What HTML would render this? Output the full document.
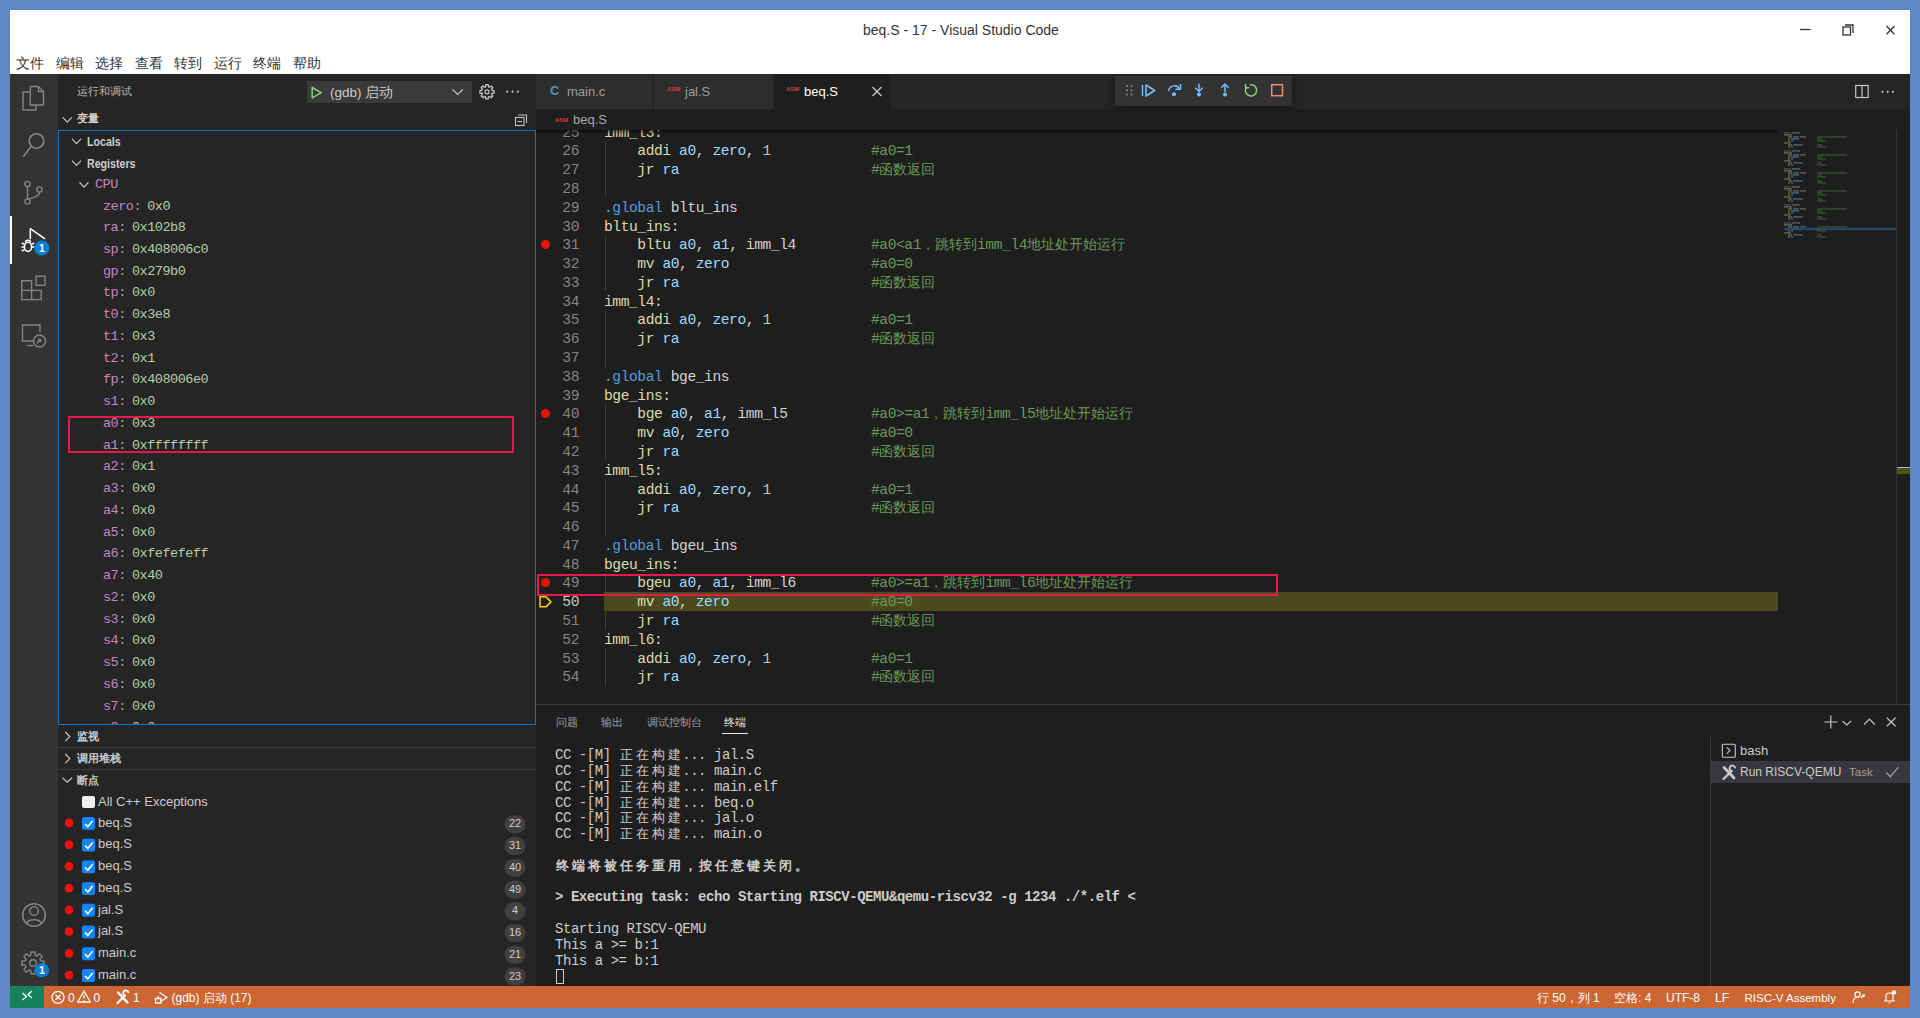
<!DOCTYPE html><html><head><meta charset="utf-8"><style>
*{margin:0;padding:0;box-sizing:border-box}
html,body{width:1920px;height:1018px;overflow:hidden;background:#6088c6;font-family:"Liberation Sans",sans-serif}
.a{position:absolute;white-space:pre}
.m{font-family:"Liberation Mono",monospace}
svg{position:absolute;overflow:visible}
.ln{position:absolute;left:0;width:43px;text-align:right;color:#858585}
.cd{position:absolute;left:68px;color:#d4d4d4}
.k{color:#dcdcaa}.r{color:#9cdcfe}.n{color:#b5cea8}.g{color:#569cd6}.c{color:#6a9955}.w{color:#d4d4d4}
.menu{top:54.5px;font-size:13.5px;color:#333;line-height:18px}
.vn{color:#c586c0}.vv{color:#b5cea8}
.row{position:absolute;height:21.74px;line-height:21.74px}
.cj{display:inline-block;width:15.9px;text-align:center;letter-spacing:0;font-size:13.25px}
</style></head><body>
<div class="a" style="left:10px;top:10px;width:1900px;height:64px;background:#fff"></div>
<div class="a" style="left:863px;top:21px;font-size:14px;color:#333;line-height:18px">beq.S - 17 - Visual Studio Code</div>
<div class="a menu" style="left:16px">文件</div>
<div class="a menu" style="left:56px">编辑</div>
<div class="a menu" style="left:95px">选择</div>
<div class="a menu" style="left:135px">查看</div>
<div class="a menu" style="left:174px">转到</div>
<div class="a menu" style="left:214px">运行</div>
<div class="a menu" style="left:253px">终端</div>
<div class="a menu" style="left:293px">帮助</div>
<svg style="left:0;top:0" width="1920" height="74"><g stroke="#333" stroke-width="1.3" fill="none"><line x1="1800" y1="29.5" x2="1810.5" y2="29.5"/><rect x="1843" y="27" width="7.5" height="8"/><polyline points="1845,25 1853,25 1853,33"/><line x1="1886.5" y1="26" x2="1894.5" y2="34.3"/><line x1="1894.5" y1="26" x2="1886.5" y2="34.3"/></g></svg>
<div class="a" style="left:10px;top:74px;width:48px;height:912px;background:#333333"></div>
<div class="a" style="left:58px;top:74px;width:478px;height:912px;background:#252526"></div>
<div class="a" style="left:536px;top:74px;width:1374px;height:912px;background:#1e1e1e"></div>
<div class="a" style="left:536px;top:74px;width:1374px;height:35px;background:#252526"></div>
<svg style="left:0;top:0" width="60" height="1018"><g stroke="#858585" stroke-width="1.4" fill="none" stroke-linejoin="round"><path d="M30.5,86.5 h8 l5,5 v13.5 h-13.5 z"/><path d="M38.5,86.5 v5 h5"/><path d="M30.5,92 h-7.5 v18 h13 v-5"/></g><g stroke="#858585" stroke-width="1.6" fill="none"><circle cx="36.5" cy="141" r="7.3"/><line x1="31.3" y1="146.3" x2="23.3" y2="156.8"/></g><g stroke="#858585" stroke-width="1.4" fill="none"><circle cx="27.5" cy="184" r="2.6"/><circle cx="27.5" cy="201.5" r="2.6"/><circle cx="39.5" cy="189.5" r="2.6"/><path d="M27.5,186.6 v12.3"/><path d="M39.5,192.1 c0,4 -4,5 -12,7"/></g><g stroke="#fff" stroke-width="1.5" fill="none" stroke-linejoin="round"><path d="M30.3,239.3 v-10.6 l14.7,10.2"/><ellipse cx="28" cy="246.8" rx="3.6" ry="4.6"/><path d="M25.5,242.3 a2.5,2 0 0 1 5,0"/><path d="M21.8,243 l2.6,1.3 M21.5,247 h2.7 M21.8,251 l2.6,-1.3 M34.2,243 l-2.6,1.3 M34.5,247 h-2.7"/></g><circle cx="41.8" cy="248" r="7.6" fill="#0a7fd8"/><text x="41.8" y="252" font-size="10.5" font-weight="bold" fill="#fff" text-anchor="middle" font-family="Liberation Sans">1</text><g stroke="#858585" stroke-width="1.4" fill="none"><path d="M21.8,280.8 h9.8 v9.6 h9.6 v9.2 h-19.4 z M21.8,290.4 h9.8 v9.2"/><rect x="36" y="276.2" width="9" height="9"/></g><g stroke="#858585" stroke-width="1.4" fill="none"><path d="M40,332 v-7 h-17.5 v16 h11"/><path d="M27,345.5 h6"/><circle cx="39.5" cy="341" r="6"/><path d="M37,343 l3,-3 M38,339.5 h2.5 v2.5"/></g><g stroke="#858585" stroke-width="1.5" fill="none"><circle cx="34" cy="915" r="11.3"/><circle cx="34" cy="911" r="4.3"/><path d="M26.5,923.5 c2,-5 13,-5 15,0"/></g><g stroke="#858585" stroke-width="1.4" fill="none"><polygon points="40.69,960.79 44.03,961.06 44.03,964.94 40.69,965.21 40.00,966.88 42.17,969.42 39.42,972.17 36.88,970.00 35.21,970.69 34.94,974.03 31.06,974.03 30.79,970.69 29.12,970.00 26.58,972.17 23.83,969.42 26.00,966.88 25.31,965.21 21.97,964.94 21.97,961.06 25.31,960.79 26.00,959.12 23.83,956.58 26.58,953.83 29.12,956.00 30.79,955.31 31.06,951.97 34.94,951.97 35.21,955.31 36.88,956.00 39.42,953.83 42.17,956.58 40.00,959.12" stroke-linejoin="round"/><circle cx="33" cy="963" r="3.3"/></g><circle cx="41.8" cy="970.2" r="7.3" fill="#0a7fd8"/><text x="41.8" y="974.2" font-size="10.5" font-weight="bold" fill="#fff" text-anchor="middle" font-family="Liberation Sans">1</text></svg>
<div class="a" style="left:10px;top:216px;width:2px;height:48px;background:#fff"></div>
<div class="a" style="left:77px;top:84px;font-size:11px;color:#bbbbbb;line-height:15px">运行和调试</div>
<div class="a" style="left:307px;top:81px;width:165px;height:22px;background:#3a3a3a"></div>
<svg style="left:0;top:0" width="540" height="140"><path d="M312.2,87.5 l9,5.2 -9,5.2 z" stroke="#89d185" stroke-width="1.5" fill="none" stroke-linejoin="round"/><path d="M452.5,89.5 l5.2,5 5.2,-5" stroke="#c5c5c5" stroke-width="1.2" fill="none"/></svg>
<div class="a" style="left:330px;top:84px;font-size:13.5px;color:#cccccc;line-height:17px">(gdb) 启动</div>
<svg style="left:0;top:0" width="540" height="140"><polygon points="492.00,90.37 494.09,90.55 494.09,93.05 492.00,93.23 491.55,94.32 492.90,95.93 491.13,97.70 489.52,96.35 488.43,96.80 488.25,98.89 485.75,98.89 485.57,96.80 484.48,96.35 482.87,97.70 481.10,95.93 482.45,94.32 482.00,93.23 479.91,93.05 479.91,90.55 482.00,90.37 482.45,89.28 481.10,87.67 482.87,85.90 484.48,87.25 485.57,86.80 485.75,84.71 488.25,84.71 488.43,86.80 489.52,87.25 491.13,85.90 492.90,87.67 491.55,89.28" stroke="#c5c5c5" stroke-width="1.3" fill="none" stroke-linejoin="round"/><circle cx="487" cy="91.8" r="2" stroke="#c5c5c5" stroke-width="1.2" fill="none"/><g fill="#c5c5c5"><circle cx="507.2" cy="91.7" r="1.1"/><circle cx="512.5" cy="91.7" r="1.1"/><circle cx="517.8" cy="91.7" r="1.1"/></g><g stroke="#c5c5c5" stroke-width="1.1" fill="none"><rect x="515.5" y="117.5" width="8.5" height="8"/><path d="M518,115 h8.5 v8"/><path d="M517.5,121.5 h4.5"/></g><path d="M62.8,117.3 l4.5,4.8 4.5,-4.8" stroke="#c5c5c5" stroke-width="1.2" fill="none"/></svg>
<div class="a" style="left:77px;top:111px;font-size:11px;font-weight:bold;color:#cccccc;line-height:15px">变量</div>
<div class="a" style="left:58px;top:130px;width:478px;height:595px;border:1px solid #0f74c4"></div>
<div class="a" style="left:59px;top:131px;width:476px;height:593px;overflow:hidden">
<div class="row a" style="left:28px;top:0.80px;font-size:12.5px;font-weight:bold;color:#cccccc;transform:scaleX(0.85);transform-origin:0 0">Locals</div>
<div class="row a" style="left:28px;top:22.54px;font-size:12.5px;font-weight:bold;color:#cccccc;transform:scaleX(0.85);transform-origin:0 0">Registers</div>
<div class="row a m" style="left:36px;top:42.78px;font-size:13.5px;letter-spacing:-0.48px;color:#c586c0">CPU</div>
<div class="row a m" style="left:44px;top:64.52px;font-size:13.5px;letter-spacing:-0.48px"><span class="vn">zero</span><span style="color:#a0a0a0">: </span><span class="vv" style="margin-left:-1.5px">0x0</span></div>
<div class="row a m" style="left:44px;top:86.26px;font-size:13.5px;letter-spacing:-0.48px"><span class="vn">ra</span><span style="color:#a0a0a0">: </span><span class="vv" style="margin-left:-1.5px">0x102b8</span></div>
<div class="row a m" style="left:44px;top:108.00px;font-size:13.5px;letter-spacing:-0.48px"><span class="vn">sp</span><span style="color:#a0a0a0">: </span><span class="vv" style="margin-left:-1.5px">0x408006c0</span></div>
<div class="row a m" style="left:44px;top:129.74px;font-size:13.5px;letter-spacing:-0.48px"><span class="vn">gp</span><span style="color:#a0a0a0">: </span><span class="vv" style="margin-left:-1.5px">0x279b0</span></div>
<div class="row a m" style="left:44px;top:151.48px;font-size:13.5px;letter-spacing:-0.48px"><span class="vn">tp</span><span style="color:#a0a0a0">: </span><span class="vv" style="margin-left:-1.5px">0x0</span></div>
<div class="row a m" style="left:44px;top:173.22px;font-size:13.5px;letter-spacing:-0.48px"><span class="vn">t0</span><span style="color:#a0a0a0">: </span><span class="vv" style="margin-left:-1.5px">0x3e8</span></div>
<div class="row a m" style="left:44px;top:194.96px;font-size:13.5px;letter-spacing:-0.48px"><span class="vn">t1</span><span style="color:#a0a0a0">: </span><span class="vv" style="margin-left:-1.5px">0x3</span></div>
<div class="row a m" style="left:44px;top:216.70px;font-size:13.5px;letter-spacing:-0.48px"><span class="vn">t2</span><span style="color:#a0a0a0">: </span><span class="vv" style="margin-left:-1.5px">0x1</span></div>
<div class="row a m" style="left:44px;top:238.44px;font-size:13.5px;letter-spacing:-0.48px"><span class="vn">fp</span><span style="color:#a0a0a0">: </span><span class="vv" style="margin-left:-1.5px">0x408006e0</span></div>
<div class="row a m" style="left:44px;top:260.18px;font-size:13.5px;letter-spacing:-0.48px"><span class="vn">s1</span><span style="color:#a0a0a0">: </span><span class="vv" style="margin-left:-1.5px">0x0</span></div>
<div class="row a m" style="left:44px;top:281.92px;font-size:13.5px;letter-spacing:-0.48px"><span class="vn">a0</span><span style="color:#a0a0a0">: </span><span class="vv" style="margin-left:-1.5px">0x3</span></div>
<div class="row a m" style="left:44px;top:303.66px;font-size:13.5px;letter-spacing:-0.48px"><span class="vn">a1</span><span style="color:#a0a0a0">: </span><span class="vv" style="margin-left:-1.5px">0xffffffff</span></div>
<div class="row a m" style="left:44px;top:325.40px;font-size:13.5px;letter-spacing:-0.48px"><span class="vn">a2</span><span style="color:#a0a0a0">: </span><span class="vv" style="margin-left:-1.5px">0x1</span></div>
<div class="row a m" style="left:44px;top:347.14px;font-size:13.5px;letter-spacing:-0.48px"><span class="vn">a3</span><span style="color:#a0a0a0">: </span><span class="vv" style="margin-left:-1.5px">0x0</span></div>
<div class="row a m" style="left:44px;top:368.88px;font-size:13.5px;letter-spacing:-0.48px"><span class="vn">a4</span><span style="color:#a0a0a0">: </span><span class="vv" style="margin-left:-1.5px">0x0</span></div>
<div class="row a m" style="left:44px;top:390.62px;font-size:13.5px;letter-spacing:-0.48px"><span class="vn">a5</span><span style="color:#a0a0a0">: </span><span class="vv" style="margin-left:-1.5px">0x0</span></div>
<div class="row a m" style="left:44px;top:412.36px;font-size:13.5px;letter-spacing:-0.48px"><span class="vn">a6</span><span style="color:#a0a0a0">: </span><span class="vv" style="margin-left:-1.5px">0xfefefeff</span></div>
<div class="row a m" style="left:44px;top:434.10px;font-size:13.5px;letter-spacing:-0.48px"><span class="vn">a7</span><span style="color:#a0a0a0">: </span><span class="vv" style="margin-left:-1.5px">0x40</span></div>
<div class="row a m" style="left:44px;top:455.84px;font-size:13.5px;letter-spacing:-0.48px"><span class="vn">s2</span><span style="color:#a0a0a0">: </span><span class="vv" style="margin-left:-1.5px">0x0</span></div>
<div class="row a m" style="left:44px;top:477.58px;font-size:13.5px;letter-spacing:-0.48px"><span class="vn">s3</span><span style="color:#a0a0a0">: </span><span class="vv" style="margin-left:-1.5px">0x0</span></div>
<div class="row a m" style="left:44px;top:499.32px;font-size:13.5px;letter-spacing:-0.48px"><span class="vn">s4</span><span style="color:#a0a0a0">: </span><span class="vv" style="margin-left:-1.5px">0x0</span></div>
<div class="row a m" style="left:44px;top:521.06px;font-size:13.5px;letter-spacing:-0.48px"><span class="vn">s5</span><span style="color:#a0a0a0">: </span><span class="vv" style="margin-left:-1.5px">0x0</span></div>
<div class="row a m" style="left:44px;top:542.80px;font-size:13.5px;letter-spacing:-0.48px"><span class="vn">s6</span><span style="color:#a0a0a0">: </span><span class="vv" style="margin-left:-1.5px">0x0</span></div>
<div class="row a m" style="left:44px;top:564.54px;font-size:13.5px;letter-spacing:-0.48px"><span class="vn">s7</span><span style="color:#a0a0a0">: </span><span class="vv" style="margin-left:-1.5px">0x0</span></div>
<div class="row a m" style="left:44px;top:586.28px;font-size:13.5px;letter-spacing:-0.48px"><span class="vn">s8</span><span style="color:#a0a0a0">: </span><span class="vv" style="margin-left:-1.5px">0x0</span></div>
<svg style="left:0;top:0" width="476" height="100"><path d="M13,7.80 l4.5,4.8 4.5,-4.8" stroke="#c5c5c5" stroke-width="1.2" fill="none"/><path d="M13,29.54 l4.5,4.8 4.5,-4.8" stroke="#c5c5c5" stroke-width="1.2" fill="none"/><path d="M20.5,51.28 l4.5,4.8 4.5,-4.8" stroke="#c5c5c5" stroke-width="1.2" fill="none"/></svg>
</div>
<div class="a" style="left:68px;top:416px;width:446px;height:37px;border:2px solid #e6194b"></div>
<div class="a" style="left:77px;top:729.0px;font-size:11px;font-weight:bold;color:#cccccc;line-height:15px">监视</div>
<div class="a" style="left:58px;top:747.0px;width:478px;height:1px;background:#3c3c3c"></div>
<div class="a" style="left:77px;top:751.0px;font-size:11px;font-weight:bold;color:#cccccc;line-height:15px">调用堆栈</div>
<div class="a" style="left:58px;top:769.0px;width:478px;height:1px;background:#3c3c3c"></div>
<div class="a" style="left:77px;top:773.0px;font-size:11px;font-weight:bold;color:#cccccc;line-height:15px">断点</div>
<svg style="left:0;top:0" width="540" height="1018"><g stroke="#c5c5c5" stroke-width="1.2" fill="none"><path d="M65.3,732 l4.5,4.6 -4.5,4.6"/><path d="M65.3,754 l4.5,4.6 -4.5,4.6"/><path d="M62.5,777.8 l4.8,4.5 4.8,-4.5"/></g></svg>
<div class="a" style="left:82px;top:795.5px;width:13px;height:12.5px;background:#f0f0f0;border-radius:2px"></div>
<div class="a" style="left:98px;top:790.90px;font-size:13px;color:#cccccc;line-height:21.74px">All C++ Exceptions</div>
<svg style="left:0;top:0" width="540" height="1018"><circle cx="69" cy="822.91" r="4.3" fill="#f01010"/><rect x="82" y="816.91" width="13" height="12.8" rx="2" fill="#1585f5"/><path d="M85,823.71 l2.8,3 4.8,-6" stroke="#fff" stroke-width="1.6" fill="none"/><rect x="504.5" y="815.21" width="21" height="18" rx="9" fill="#404040"/><circle cx="69" cy="844.65" r="4.3" fill="#f01010"/><rect x="82" y="838.65" width="13" height="12.8" rx="2" fill="#1585f5"/><path d="M85,845.45 l2.8,3 4.8,-6" stroke="#fff" stroke-width="1.6" fill="none"/><rect x="504.5" y="836.95" width="21" height="18" rx="9" fill="#404040"/><circle cx="69" cy="866.39" r="4.3" fill="#f01010"/><rect x="82" y="860.39" width="13" height="12.8" rx="2" fill="#1585f5"/><path d="M85,867.19 l2.8,3 4.8,-6" stroke="#fff" stroke-width="1.6" fill="none"/><rect x="504.5" y="858.69" width="21" height="18" rx="9" fill="#404040"/><circle cx="69" cy="888.13" r="4.3" fill="#f01010"/><rect x="82" y="882.13" width="13" height="12.8" rx="2" fill="#1585f5"/><path d="M85,888.93 l2.8,3 4.8,-6" stroke="#fff" stroke-width="1.6" fill="none"/><rect x="504.5" y="880.43" width="21" height="18" rx="9" fill="#404040"/><circle cx="69" cy="909.87" r="4.3" fill="#f01010"/><rect x="82" y="903.87" width="13" height="12.8" rx="2" fill="#1585f5"/><path d="M85,910.67 l2.8,3 4.8,-6" stroke="#fff" stroke-width="1.6" fill="none"/><rect x="504.5" y="902.17" width="21" height="18" rx="9" fill="#404040"/><circle cx="69" cy="931.61" r="4.3" fill="#f01010"/><rect x="82" y="925.61" width="13" height="12.8" rx="2" fill="#1585f5"/><path d="M85,932.41 l2.8,3 4.8,-6" stroke="#fff" stroke-width="1.6" fill="none"/><rect x="504.5" y="923.91" width="21" height="18" rx="9" fill="#404040"/><circle cx="69" cy="953.35" r="4.3" fill="#f01010"/><rect x="82" y="947.35" width="13" height="12.8" rx="2" fill="#1585f5"/><path d="M85,954.15 l2.8,3 4.8,-6" stroke="#fff" stroke-width="1.6" fill="none"/><rect x="504.5" y="945.65" width="21" height="18" rx="9" fill="#404040"/><circle cx="69" cy="975.09" r="4.3" fill="#f01010"/><rect x="82" y="969.09" width="13" height="12.8" rx="2" fill="#1585f5"/><path d="M85,975.89 l2.8,3 4.8,-6" stroke="#fff" stroke-width="1.6" fill="none"/><rect x="504.5" y="967.39" width="21" height="18" rx="9" fill="#404040"/></svg>
<div class="a" style="left:98px;top:811.64px;font-size:13px;color:#cccccc;line-height:21.74px">beq.S</div>
<div class="a" style="left:504.5px;width:21px;text-align:center;top:813.34px;font-size:11px;color:#cccccc;line-height:21.74px">22</div>
<div class="a" style="left:98px;top:833.38px;font-size:13px;color:#cccccc;line-height:21.74px">beq.S</div>
<div class="a" style="left:504.5px;width:21px;text-align:center;top:835.08px;font-size:11px;color:#cccccc;line-height:21.74px">31</div>
<div class="a" style="left:98px;top:855.12px;font-size:13px;color:#cccccc;line-height:21.74px">beq.S</div>
<div class="a" style="left:504.5px;width:21px;text-align:center;top:856.82px;font-size:11px;color:#cccccc;line-height:21.74px">40</div>
<div class="a" style="left:98px;top:876.86px;font-size:13px;color:#cccccc;line-height:21.74px">beq.S</div>
<div class="a" style="left:504.5px;width:21px;text-align:center;top:878.56px;font-size:11px;color:#cccccc;line-height:21.74px">49</div>
<div class="a" style="left:98px;top:898.60px;font-size:13px;color:#cccccc;line-height:21.74px">jal.S</div>
<div class="a" style="left:504.5px;width:21px;text-align:center;top:900.30px;font-size:11px;color:#cccccc;line-height:21.74px">4</div>
<div class="a" style="left:98px;top:920.34px;font-size:13px;color:#cccccc;line-height:21.74px">jal.S</div>
<div class="a" style="left:504.5px;width:21px;text-align:center;top:922.04px;font-size:11px;color:#cccccc;line-height:21.74px">16</div>
<div class="a" style="left:98px;top:942.08px;font-size:13px;color:#cccccc;line-height:21.74px">main.c</div>
<div class="a" style="left:504.5px;width:21px;text-align:center;top:943.78px;font-size:11px;color:#cccccc;line-height:21.74px">21</div>
<div class="a" style="left:98px;top:963.82px;font-size:13px;color:#cccccc;line-height:21.74px">main.c</div>
<div class="a" style="left:504.5px;width:21px;text-align:center;top:965.52px;font-size:11px;color:#cccccc;line-height:21.74px">23</div>
<div class="a" style="left:536px;top:74px;width:116px;height:35px;background:#2d2d2d"></div>
<div class="a" style="left:652.5px;top:74px;width:120px;height:35px;background:#2d2d2d;border-left:1px solid #252526"></div>
<div class="a" style="left:772.5px;top:74px;width:117px;height:35px;background:#1e1e1e;border-left:1px solid #252526"></div>
<div class="a" style="left:550px;top:82px;font-size:13px;font-weight:bold;color:#519aba;line-height:17px">C</div>
<div class="a" style="left:567px;top:83px;font-size:13px;color:#9d9d9d;line-height:17px">main.c</div>
<div class="a" style="left:667px;top:85px;font-size:6px;font-weight:bold;color:#cc3e44;line-height:8px">ASM</div>
<div class="a" style="left:685px;top:83px;font-size:13px;color:#9d9d9d;line-height:17px">jal.S</div>
<div class="a" style="left:786px;top:85px;font-size:6px;font-weight:bold;color:#cc3e44;line-height:8px">ASM</div>
<div class="a" style="left:804px;top:83px;font-size:13px;color:#ffffff;line-height:17px">beq.S</div>
<svg style="left:0;top:0" width="1920" height="140"><g stroke="#cccccc" stroke-width="1.3"><line x1="872.5" y1="87" x2="881.5" y2="96"/><line x1="881.5" y1="87" x2="872.5" y2="96"/></g><g stroke="#c5c5c5" stroke-width="1.2" fill="none"><rect x="1855.7" y="85.5" width="12.5" height="12"/><line x1="1862" y1="85.5" x2="1862" y2="97.5"/></g><g fill="#c5c5c5"><circle cx="1882.5" cy="91.8" r="1.1"/><circle cx="1887.7" cy="91.8" r="1.1"/><circle cx="1892.9" cy="91.8" r="1.1"/></g></svg>
<div class="a" style="left:555px;top:116px;font-size:6px;font-weight:bold;color:#cc3e44;line-height:8px">ASM</div>
<div class="a" style="left:573px;top:111px;font-size:13px;color:#a9a9a9;line-height:17px">beq.S</div>
<div class="a" style="left:1114.5px;top:75.5px;width:177px;height:30px;background:#333333;box-shadow:0 2px 6px rgba(0,0,0,.45)"></div>
<svg style="left:0;top:0" width="1920" height="140"><g fill="#8a8a8a"><circle cx="1127" cy="86" r="1"/><circle cx="1131.5" cy="86" r="1"/><circle cx="1127" cy="90.2" r="1"/><circle cx="1131.5" cy="90.2" r="1"/><circle cx="1127" cy="94.4" r="1"/><circle cx="1131.5" cy="94.4" r="1"/></g><g stroke="#75beff" stroke-width="1.5" fill="none" stroke-linejoin="round"><line x1="1142.5" y1="85" x2="1142.5" y2="96"/><path d="M1146,85 l8.7,5.5 -8.7,5.5 z"/><path d="M1168.5,91 c1,-6 9,-7 11,-2"/><path d="M1180.5,84 v5.3 h-5"/><path d="M1199,83.5 v8"/><path d="M1195.3,87.8 l3.7,3.7 3.7,-3.7"/><path d="M1225,84 v8"/><path d="M1221.3,87.7 l3.7,-3.7 3.7,3.7"/></g><g fill="#75beff"><circle cx="1174" cy="94.3" r="2"/><circle cx="1199" cy="94.5" r="2"/><circle cx="1225" cy="94.5" r="2"/></g><g stroke="#89d185" stroke-width="1.5" fill="none"><path d="M1246.5,87 a5.6,5.6 0 1 0 3.5,-2.2"/><path d="M1245.5,84 v3.7 h3.7"/></g><rect x="1271.7" y="84.7" width="10.8" height="11" stroke="#f48771" stroke-width="1.5" fill="none"/></svg>
<div class="a m" style="left:536px;top:129.5px;width:1242px;height:574.5px;overflow:hidden;font-size:14.6px;letter-spacing:-0.42px">
<div class="a" style="left:68px;top:462.46px;width:1174px;height:18.79px;background:#4b4a1e"></div>
<div class="a" style="left:69px;top:11.60px;width:1px;height:56.36px;background:#404040"></div><div class="a" style="left:69px;top:105.53px;width:1px;height:56.36px;background:#404040"></div><div class="a" style="left:69px;top:180.67px;width:1px;height:56.36px;background:#404040"></div><div class="a" style="left:69px;top:274.60px;width:1px;height:56.36px;background:#404040"></div><div class="a" style="left:69px;top:349.75px;width:1px;height:56.36px;background:#404040"></div><div class="a" style="left:69px;top:443.68px;width:1px;height:56.36px;background:#404040"></div><div class="a" style="left:69px;top:518.82px;width:1px;height:37.57px;background:#404040"></div>
<div class="ln" style="top:-5.89px;line-height:18.79px;color:#858585">25</div>
<div class="cd a" style="top:-5.89px;line-height:18.79px"><span class="k">imm_l3:</span></div>
<div class="ln" style="top:12.90px;line-height:18.79px;color:#858585">26</div>
<div class="cd a" style="top:12.90px;line-height:18.79px"><span class="w">    </span><span class="k">addi</span><span class="w"> </span><span class="r">a0</span><span class="w">, </span><span class="r">zero</span><span class="w">, </span><span class="n">1</span></div>
<div class="a c" style="left:335px;top:12.90px;line-height:18.79px">#a0=1</div>
<div class="ln" style="top:31.69px;line-height:18.79px;color:#858585">27</div>
<div class="cd a" style="top:31.69px;line-height:18.79px"><span class="w">    </span><span class="k">jr</span><span class="w"> </span><span class="r">ra</span></div>
<div class="a c" style="left:335px;top:31.69px;line-height:18.79px">#<span style="font-size:13.9px;letter-spacing:0">函</span><span style="font-size:13.9px;letter-spacing:0">数</span><span style="font-size:13.9px;letter-spacing:0">返</span><span style="font-size:13.9px;letter-spacing:0">回</span></div>
<div class="ln" style="top:50.47px;line-height:18.79px;color:#858585">28</div>
<div class="cd a" style="top:50.47px;line-height:18.79px"></div>
<div class="ln" style="top:69.26px;line-height:18.79px;color:#858585">29</div>
<div class="cd a" style="top:69.26px;line-height:18.79px"><span class="g">.global</span><span class="w"> bltu_ins</span></div>
<div class="ln" style="top:88.04px;line-height:18.79px;color:#858585">30</div>
<div class="cd a" style="top:88.04px;line-height:18.79px"><span class="k">bltu_ins:</span></div>
<div class="ln" style="top:106.83px;line-height:18.79px;color:#858585">31</div>
<div class="cd a" style="top:106.83px;line-height:18.79px"><span class="w">    </span><span class="k">bltu</span><span class="w"> </span><span class="r">a0</span><span class="w">, </span><span class="r">a1</span><span class="w">, imm_l4</span></div>
<div class="a c" style="left:335px;top:106.83px;line-height:18.79px">#a0&lt;a1<span style="font-size:13.9px;letter-spacing:0">，</span><span style="font-size:13.9px;letter-spacing:0">跳</span><span style="font-size:13.9px;letter-spacing:0">转</span><span style="font-size:13.9px;letter-spacing:0">到</span>imm_l4<span style="font-size:13.9px;letter-spacing:0">地</span><span style="font-size:13.9px;letter-spacing:0">址</span><span style="font-size:13.9px;letter-spacing:0">处</span><span style="font-size:13.9px;letter-spacing:0">开</span><span style="font-size:13.9px;letter-spacing:0">始</span><span style="font-size:13.9px;letter-spacing:0">运</span><span style="font-size:13.9px;letter-spacing:0">行</span></div>
<div class="ln" style="top:125.62px;line-height:18.79px;color:#858585">32</div>
<div class="cd a" style="top:125.62px;line-height:18.79px"><span class="w">    </span><span class="k">mv</span><span class="w"> </span><span class="r">a0</span><span class="w">, </span><span class="r">zero</span></div>
<div class="a c" style="left:335px;top:125.62px;line-height:18.79px">#a0=0</div>
<div class="ln" style="top:144.40px;line-height:18.79px;color:#858585">33</div>
<div class="cd a" style="top:144.40px;line-height:18.79px"><span class="w">    </span><span class="k">jr</span><span class="w"> </span><span class="r">ra</span></div>
<div class="a c" style="left:335px;top:144.40px;line-height:18.79px">#<span style="font-size:13.9px;letter-spacing:0">函</span><span style="font-size:13.9px;letter-spacing:0">数</span><span style="font-size:13.9px;letter-spacing:0">返</span><span style="font-size:13.9px;letter-spacing:0">回</span></div>
<div class="ln" style="top:163.19px;line-height:18.79px;color:#858585">34</div>
<div class="cd a" style="top:163.19px;line-height:18.79px"><span class="k">imm_l4:</span></div>
<div class="ln" style="top:181.97px;line-height:18.79px;color:#858585">35</div>
<div class="cd a" style="top:181.97px;line-height:18.79px"><span class="w">    </span><span class="k">addi</span><span class="w"> </span><span class="r">a0</span><span class="w">, </span><span class="r">zero</span><span class="w">, </span><span class="n">1</span></div>
<div class="a c" style="left:335px;top:181.97px;line-height:18.79px">#a0=1</div>
<div class="ln" style="top:200.76px;line-height:18.79px;color:#858585">36</div>
<div class="cd a" style="top:200.76px;line-height:18.79px"><span class="w">    </span><span class="k">jr</span><span class="w"> </span><span class="r">ra</span></div>
<div class="a c" style="left:335px;top:200.76px;line-height:18.79px">#<span style="font-size:13.9px;letter-spacing:0">函</span><span style="font-size:13.9px;letter-spacing:0">数</span><span style="font-size:13.9px;letter-spacing:0">返</span><span style="font-size:13.9px;letter-spacing:0">回</span></div>
<div class="ln" style="top:219.55px;line-height:18.79px;color:#858585">37</div>
<div class="cd a" style="top:219.55px;line-height:18.79px"></div>
<div class="ln" style="top:238.33px;line-height:18.79px;color:#858585">38</div>
<div class="cd a" style="top:238.33px;line-height:18.79px"><span class="g">.global</span><span class="w"> bge_ins</span></div>
<div class="ln" style="top:257.12px;line-height:18.79px;color:#858585">39</div>
<div class="cd a" style="top:257.12px;line-height:18.79px"><span class="k">bge_ins:</span></div>
<div class="ln" style="top:275.90px;line-height:18.79px;color:#858585">40</div>
<div class="cd a" style="top:275.90px;line-height:18.79px"><span class="w">    </span><span class="k">bge</span><span class="w"> </span><span class="r">a0</span><span class="w">, </span><span class="r">a1</span><span class="w">, imm_l5</span></div>
<div class="a c" style="left:335px;top:275.90px;line-height:18.79px">#a0&gt;=a1<span style="font-size:13.9px;letter-spacing:0">，</span><span style="font-size:13.9px;letter-spacing:0">跳</span><span style="font-size:13.9px;letter-spacing:0">转</span><span style="font-size:13.9px;letter-spacing:0">到</span>imm_l5<span style="font-size:13.9px;letter-spacing:0">地</span><span style="font-size:13.9px;letter-spacing:0">址</span><span style="font-size:13.9px;letter-spacing:0">处</span><span style="font-size:13.9px;letter-spacing:0">开</span><span style="font-size:13.9px;letter-spacing:0">始</span><span style="font-size:13.9px;letter-spacing:0">运</span><span style="font-size:13.9px;letter-spacing:0">行</span></div>
<div class="ln" style="top:294.69px;line-height:18.79px;color:#858585">41</div>
<div class="cd a" style="top:294.69px;line-height:18.79px"><span class="w">    </span><span class="k">mv</span><span class="w"> </span><span class="r">a0</span><span class="w">, </span><span class="r">zero</span></div>
<div class="a c" style="left:335px;top:294.69px;line-height:18.79px">#a0=0</div>
<div class="ln" style="top:313.48px;line-height:18.79px;color:#858585">42</div>
<div class="cd a" style="top:313.48px;line-height:18.79px"><span class="w">    </span><span class="k">jr</span><span class="w"> </span><span class="r">ra</span></div>
<div class="a c" style="left:335px;top:313.48px;line-height:18.79px">#<span style="font-size:13.9px;letter-spacing:0">函</span><span style="font-size:13.9px;letter-spacing:0">数</span><span style="font-size:13.9px;letter-spacing:0">返</span><span style="font-size:13.9px;letter-spacing:0">回</span></div>
<div class="ln" style="top:332.26px;line-height:18.79px;color:#858585">43</div>
<div class="cd a" style="top:332.26px;line-height:18.79px"><span class="k">imm_l5:</span></div>
<div class="ln" style="top:351.05px;line-height:18.79px;color:#858585">44</div>
<div class="cd a" style="top:351.05px;line-height:18.79px"><span class="w">    </span><span class="k">addi</span><span class="w"> </span><span class="r">a0</span><span class="w">, </span><span class="r">zero</span><span class="w">, </span><span class="n">1</span></div>
<div class="a c" style="left:335px;top:351.05px;line-height:18.79px">#a0=1</div>
<div class="ln" style="top:369.83px;line-height:18.79px;color:#858585">45</div>
<div class="cd a" style="top:369.83px;line-height:18.79px"><span class="w">    </span><span class="k">jr</span><span class="w"> </span><span class="r">ra</span></div>
<div class="a c" style="left:335px;top:369.83px;line-height:18.79px">#<span style="font-size:13.9px;letter-spacing:0">函</span><span style="font-size:13.9px;letter-spacing:0">数</span><span style="font-size:13.9px;letter-spacing:0">返</span><span style="font-size:13.9px;letter-spacing:0">回</span></div>
<div class="ln" style="top:388.62px;line-height:18.79px;color:#858585">46</div>
<div class="cd a" style="top:388.62px;line-height:18.79px"></div>
<div class="ln" style="top:407.41px;line-height:18.79px;color:#858585">47</div>
<div class="cd a" style="top:407.41px;line-height:18.79px"><span class="g">.global</span><span class="w"> bgeu_ins</span></div>
<div class="ln" style="top:426.19px;line-height:18.79px;color:#858585">48</div>
<div class="cd a" style="top:426.19px;line-height:18.79px"><span class="k">bgeu_ins:</span></div>
<div class="ln" style="top:444.98px;line-height:18.79px;color:#858585">49</div>
<div class="cd a" style="top:444.98px;line-height:18.79px"><span class="w">    </span><span class="k">bgeu</span><span class="w"> </span><span class="r">a0</span><span class="w">, </span><span class="r">a1</span><span class="w">, imm_l6</span></div>
<div class="a c" style="left:335px;top:444.98px;line-height:18.79px">#a0&gt;=a1<span style="font-size:13.9px;letter-spacing:0">，</span><span style="font-size:13.9px;letter-spacing:0">跳</span><span style="font-size:13.9px;letter-spacing:0">转</span><span style="font-size:13.9px;letter-spacing:0">到</span>imm_l6<span style="font-size:13.9px;letter-spacing:0">地</span><span style="font-size:13.9px;letter-spacing:0">址</span><span style="font-size:13.9px;letter-spacing:0">处</span><span style="font-size:13.9px;letter-spacing:0">开</span><span style="font-size:13.9px;letter-spacing:0">始</span><span style="font-size:13.9px;letter-spacing:0">运</span><span style="font-size:13.9px;letter-spacing:0">行</span></div>
<div class="ln" style="top:463.76px;line-height:18.79px;color:#c6c6c6">50</div>
<div class="cd a" style="top:463.76px;line-height:18.79px"><span class="w">    </span><span class="k">mv</span><span class="w"> </span><span class="r">a0</span><span class="w">, </span><span class="r">zero</span></div>
<div class="a c" style="left:335px;top:463.76px;line-height:18.79px">#a0=0</div>
<div class="ln" style="top:482.55px;line-height:18.79px;color:#858585">51</div>
<div class="cd a" style="top:482.55px;line-height:18.79px"><span class="w">    </span><span class="k">jr</span><span class="w"> </span><span class="r">ra</span></div>
<div class="a c" style="left:335px;top:482.55px;line-height:18.79px">#<span style="font-size:13.9px;letter-spacing:0">函</span><span style="font-size:13.9px;letter-spacing:0">数</span><span style="font-size:13.9px;letter-spacing:0">返</span><span style="font-size:13.9px;letter-spacing:0">回</span></div>
<div class="ln" style="top:501.34px;line-height:18.79px;color:#858585">52</div>
<div class="cd a" style="top:501.34px;line-height:18.79px"><span class="k">imm_l6:</span></div>
<div class="ln" style="top:520.12px;line-height:18.79px;color:#858585">53</div>
<div class="cd a" style="top:520.12px;line-height:18.79px"><span class="w">    </span><span class="k">addi</span><span class="w"> </span><span class="r">a0</span><span class="w">, </span><span class="r">zero</span><span class="w">, </span><span class="n">1</span></div>
<div class="a c" style="left:335px;top:520.12px;line-height:18.79px">#a0=1</div>
<div class="ln" style="top:538.91px;line-height:18.79px;color:#858585">54</div>
<div class="cd a" style="top:538.91px;line-height:18.79px"><span class="w">    </span><span class="k">jr</span><span class="w"> </span><span class="r">ra</span></div>
<div class="a c" style="left:335px;top:538.91px;line-height:18.79px">#<span style="font-size:13.9px;letter-spacing:0">函</span><span style="font-size:13.9px;letter-spacing:0">数</span><span style="font-size:13.9px;letter-spacing:0">返</span><span style="font-size:13.9px;letter-spacing:0">回</span></div>
<div class="a" style="left:4.80px;top:110.42px;width:9px;height:9px;border-radius:50%;background:#e51400"></div>
<div class="a" style="left:4.80px;top:279.50px;width:9px;height:9px;border-radius:50%;background:#e51400"></div>
<div class="a" style="left:4.80px;top:448.57px;width:9px;height:9px;border-radius:50%;background:#e51400"></div>
<svg style="left:0;top:0" width="60" height="600"><path d="M4,466.86 h6 l5,5 -5,5 h-6 z" stroke="#ffcc00" stroke-width="1.5" fill="none" stroke-linejoin="round"/></svg>
</div>
<div class="a" style="left:536px;top:129.5px;width:1242px;height:4px;background:linear-gradient(rgba(0,0,0,.55),rgba(0,0,0,0))"></div>
<div class="a" style="left:536.5px;top:573.5px;width:741px;height:22.5px;border:2px solid #e6194b"></div>
<svg style="left:0;top:0" width="1920" height="300"><rect x="1784" y="132.3" width="7" height="1.2" fill="#4a7db0" opacity="0.62"/><rect x="1792" y="132.3" width="8" height="1.2" fill="#9a9a9a" opacity="0.62"/><rect x="1784" y="134.3" width="8" height="1.2" fill="#a8a88a" opacity="0.62"/><rect x="1788" y="136.3" width="4" height="1.2" fill="#a8a88a" opacity="0.62"/><rect x="1793" y="136.3" width="6" height="1.2" fill="#7aa6c0" opacity="0.62"/><rect x="1800" y="136.3" width="6" height="1.2" fill="#9a9a9a" opacity="0.62"/><rect x="1817" y="136.3" width="30" height="1.2" fill="#4f7a45" opacity="0.62"/><rect x="1788" y="138.3" width="2" height="1.2" fill="#a8a88a" opacity="0.62"/><rect x="1791" y="138.3" width="8" height="1.2" fill="#7aa6c0" opacity="0.62"/><rect x="1817" y="138.3" width="5" height="1.2" fill="#4f7a45" opacity="0.62"/><rect x="1788" y="140.3" width="2" height="1.2" fill="#a8a88a" opacity="0.62"/><rect x="1791" y="140.3" width="2" height="1.2" fill="#7aa6c0" opacity="0.62"/><rect x="1817" y="140.3" width="9" height="1.2" fill="#4f7a45" opacity="0.62"/><rect x="1784" y="142.3" width="7" height="1.2" fill="#a8a88a" opacity="0.62"/><rect x="1788" y="144.3" width="4" height="1.2" fill="#a8a88a" opacity="0.62"/><rect x="1793" y="144.3" width="10" height="1.2" fill="#7aa6c0" opacity="0.62"/><rect x="1817" y="144.3" width="5" height="1.2" fill="#4f7a45" opacity="0.62"/><rect x="1788" y="146.3" width="2" height="1.2" fill="#a8a88a" opacity="0.62"/><rect x="1791" y="146.3" width="2" height="1.2" fill="#7aa6c0" opacity="0.62"/><rect x="1817" y="146.3" width="9" height="1.2" fill="#4f7a45" opacity="0.62"/><rect x="1784" y="150.3" width="7" height="1.2" fill="#4a7db0" opacity="0.62"/><rect x="1792" y="150.3" width="8" height="1.2" fill="#9a9a9a" opacity="0.62"/><rect x="1784" y="152.3" width="8" height="1.2" fill="#a8a88a" opacity="0.62"/><rect x="1788" y="154.3" width="4" height="1.2" fill="#a8a88a" opacity="0.62"/><rect x="1793" y="154.3" width="6" height="1.2" fill="#7aa6c0" opacity="0.62"/><rect x="1800" y="154.3" width="6" height="1.2" fill="#9a9a9a" opacity="0.62"/><rect x="1817" y="154.3" width="30" height="1.2" fill="#4f7a45" opacity="0.62"/><rect x="1788" y="156.3" width="2" height="1.2" fill="#a8a88a" opacity="0.62"/><rect x="1791" y="156.3" width="8" height="1.2" fill="#7aa6c0" opacity="0.62"/><rect x="1817" y="156.3" width="5" height="1.2" fill="#4f7a45" opacity="0.62"/><rect x="1788" y="158.3" width="2" height="1.2" fill="#a8a88a" opacity="0.62"/><rect x="1791" y="158.3" width="2" height="1.2" fill="#7aa6c0" opacity="0.62"/><rect x="1817" y="158.3" width="9" height="1.2" fill="#4f7a45" opacity="0.62"/><rect x="1784" y="160.3" width="7" height="1.2" fill="#a8a88a" opacity="0.62"/><rect x="1788" y="162.3" width="4" height="1.2" fill="#a8a88a" opacity="0.62"/><rect x="1793" y="162.3" width="10" height="1.2" fill="#7aa6c0" opacity="0.62"/><rect x="1817" y="162.3" width="5" height="1.2" fill="#4f7a45" opacity="0.62"/><rect x="1788" y="164.3" width="2" height="1.2" fill="#a8a88a" opacity="0.62"/><rect x="1791" y="164.3" width="2" height="1.2" fill="#7aa6c0" opacity="0.62"/><rect x="1817" y="164.3" width="9" height="1.2" fill="#4f7a45" opacity="0.62"/><rect x="1784" y="168.3" width="7" height="1.2" fill="#4a7db0" opacity="0.62"/><rect x="1792" y="168.3" width="8" height="1.2" fill="#9a9a9a" opacity="0.62"/><rect x="1784" y="170.3" width="8" height="1.2" fill="#a8a88a" opacity="0.62"/><rect x="1788" y="172.3" width="4" height="1.2" fill="#a8a88a" opacity="0.62"/><rect x="1793" y="172.3" width="6" height="1.2" fill="#7aa6c0" opacity="0.62"/><rect x="1800" y="172.3" width="6" height="1.2" fill="#9a9a9a" opacity="0.62"/><rect x="1817" y="172.3" width="30" height="1.2" fill="#4f7a45" opacity="0.62"/><rect x="1788" y="174.3" width="2" height="1.2" fill="#a8a88a" opacity="0.62"/><rect x="1791" y="174.3" width="8" height="1.2" fill="#7aa6c0" opacity="0.62"/><rect x="1817" y="174.3" width="5" height="1.2" fill="#4f7a45" opacity="0.62"/><rect x="1788" y="176.3" width="2" height="1.2" fill="#a8a88a" opacity="0.62"/><rect x="1791" y="176.3" width="2" height="1.2" fill="#7aa6c0" opacity="0.62"/><rect x="1817" y="176.3" width="9" height="1.2" fill="#4f7a45" opacity="0.62"/><rect x="1784" y="178.3" width="7" height="1.2" fill="#a8a88a" opacity="0.62"/><rect x="1788" y="180.3" width="4" height="1.2" fill="#a8a88a" opacity="0.62"/><rect x="1793" y="180.3" width="10" height="1.2" fill="#7aa6c0" opacity="0.62"/><rect x="1817" y="180.3" width="5" height="1.2" fill="#4f7a45" opacity="0.62"/><rect x="1788" y="182.3" width="2" height="1.2" fill="#a8a88a" opacity="0.62"/><rect x="1791" y="182.3" width="2" height="1.2" fill="#7aa6c0" opacity="0.62"/><rect x="1817" y="182.3" width="9" height="1.2" fill="#4f7a45" opacity="0.62"/><rect x="1784" y="186.3" width="7" height="1.2" fill="#4a7db0" opacity="0.62"/><rect x="1792" y="186.3" width="8" height="1.2" fill="#9a9a9a" opacity="0.62"/><rect x="1784" y="188.3" width="8" height="1.2" fill="#a8a88a" opacity="0.62"/><rect x="1788" y="190.3" width="4" height="1.2" fill="#a8a88a" opacity="0.62"/><rect x="1793" y="190.3" width="6" height="1.2" fill="#7aa6c0" opacity="0.62"/><rect x="1800" y="190.3" width="6" height="1.2" fill="#9a9a9a" opacity="0.62"/><rect x="1817" y="190.3" width="30" height="1.2" fill="#4f7a45" opacity="0.62"/><rect x="1788" y="192.3" width="2" height="1.2" fill="#a8a88a" opacity="0.62"/><rect x="1791" y="192.3" width="8" height="1.2" fill="#7aa6c0" opacity="0.62"/><rect x="1817" y="192.3" width="5" height="1.2" fill="#4f7a45" opacity="0.62"/><rect x="1788" y="194.3" width="2" height="1.2" fill="#a8a88a" opacity="0.62"/><rect x="1791" y="194.3" width="2" height="1.2" fill="#7aa6c0" opacity="0.62"/><rect x="1817" y="194.3" width="9" height="1.2" fill="#4f7a45" opacity="0.62"/><rect x="1784" y="196.3" width="7" height="1.2" fill="#a8a88a" opacity="0.62"/><rect x="1788" y="198.3" width="4" height="1.2" fill="#a8a88a" opacity="0.62"/><rect x="1793" y="198.3" width="10" height="1.2" fill="#7aa6c0" opacity="0.62"/><rect x="1817" y="198.3" width="5" height="1.2" fill="#4f7a45" opacity="0.62"/><rect x="1788" y="200.3" width="2" height="1.2" fill="#a8a88a" opacity="0.62"/><rect x="1791" y="200.3" width="2" height="1.2" fill="#7aa6c0" opacity="0.62"/><rect x="1817" y="200.3" width="9" height="1.2" fill="#4f7a45" opacity="0.62"/><rect x="1784" y="204.3" width="7" height="1.2" fill="#4a7db0" opacity="0.62"/><rect x="1792" y="204.3" width="8" height="1.2" fill="#9a9a9a" opacity="0.62"/><rect x="1784" y="206.3" width="8" height="1.2" fill="#a8a88a" opacity="0.62"/><rect x="1788" y="208.3" width="4" height="1.2" fill="#a8a88a" opacity="0.62"/><rect x="1793" y="208.3" width="6" height="1.2" fill="#7aa6c0" opacity="0.62"/><rect x="1800" y="208.3" width="6" height="1.2" fill="#9a9a9a" opacity="0.62"/><rect x="1817" y="208.3" width="30" height="1.2" fill="#4f7a45" opacity="0.62"/><rect x="1788" y="210.3" width="2" height="1.2" fill="#a8a88a" opacity="0.62"/><rect x="1791" y="210.3" width="8" height="1.2" fill="#7aa6c0" opacity="0.62"/><rect x="1817" y="210.3" width="5" height="1.2" fill="#4f7a45" opacity="0.62"/><rect x="1788" y="212.3" width="2" height="1.2" fill="#a8a88a" opacity="0.62"/><rect x="1791" y="212.3" width="2" height="1.2" fill="#7aa6c0" opacity="0.62"/><rect x="1817" y="212.3" width="9" height="1.2" fill="#4f7a45" opacity="0.62"/><rect x="1784" y="214.3" width="7" height="1.2" fill="#a8a88a" opacity="0.62"/><rect x="1788" y="216.3" width="4" height="1.2" fill="#a8a88a" opacity="0.62"/><rect x="1793" y="216.3" width="10" height="1.2" fill="#7aa6c0" opacity="0.62"/><rect x="1817" y="216.3" width="5" height="1.2" fill="#4f7a45" opacity="0.62"/><rect x="1788" y="218.3" width="2" height="1.2" fill="#a8a88a" opacity="0.62"/><rect x="1791" y="218.3" width="2" height="1.2" fill="#7aa6c0" opacity="0.62"/><rect x="1817" y="218.3" width="9" height="1.2" fill="#4f7a45" opacity="0.62"/><rect x="1784" y="222.3" width="7" height="1.2" fill="#4a7db0" opacity="0.62"/><rect x="1792" y="222.3" width="8" height="1.2" fill="#9a9a9a" opacity="0.62"/><rect x="1784" y="224.3" width="8" height="1.2" fill="#a8a88a" opacity="0.62"/><rect x="1788" y="226.3" width="4" height="1.2" fill="#a8a88a" opacity="0.62"/><rect x="1793" y="226.3" width="6" height="1.2" fill="#7aa6c0" opacity="0.62"/><rect x="1800" y="226.3" width="6" height="1.2" fill="#9a9a9a" opacity="0.62"/><rect x="1817" y="226.3" width="30" height="1.2" fill="#4f7a45" opacity="0.62"/><rect x="1788" y="228.3" width="2" height="1.2" fill="#a8a88a" opacity="0.62"/><rect x="1791" y="228.3" width="8" height="1.2" fill="#7aa6c0" opacity="0.62"/><rect x="1817" y="228.3" width="5" height="1.2" fill="#4f7a45" opacity="0.62"/><rect x="1788" y="230.3" width="2" height="1.2" fill="#a8a88a" opacity="0.62"/><rect x="1791" y="230.3" width="2" height="1.2" fill="#7aa6c0" opacity="0.62"/><rect x="1817" y="230.3" width="9" height="1.2" fill="#4f7a45" opacity="0.62"/><rect x="1784" y="232.3" width="7" height="1.2" fill="#a8a88a" opacity="0.62"/><rect x="1788" y="234.3" width="4" height="1.2" fill="#a8a88a" opacity="0.62"/><rect x="1793" y="234.3" width="10" height="1.2" fill="#7aa6c0" opacity="0.62"/><rect x="1817" y="234.3" width="5" height="1.2" fill="#4f7a45" opacity="0.62"/><rect x="1788" y="236.3" width="2" height="1.2" fill="#a8a88a" opacity="0.62"/><rect x="1791" y="236.3" width="2" height="1.2" fill="#7aa6c0" opacity="0.62"/><rect x="1817" y="236.3" width="9" height="1.2" fill="#4f7a45" opacity="0.62"/><rect x="1784" y="227.8" width="112" height="2.5" fill="#264f78" opacity="0.8"/></svg>
<div class="a" style="left:1896px;top:130px;width:1px;height:574px;background:#333333"></div>
<div class="a" style="left:1897px;top:466.5px;width:13px;height:1.5px;background:#b9b9a0"></div><div class="a" style="left:1897px;top:468px;width:13px;height:5.5px;background:#4f5214"></div>
<div class="a" style="left:536px;top:704px;width:1374px;height:1px;background:#3c3c3c"></div>
<div class="a" style="left:555.5px;top:714.5px;font-size:11px;color:#a0a0a0;line-height:15px">问题</div>
<div class="a" style="left:600.5px;top:714.5px;font-size:11px;color:#a0a0a0;line-height:15px">输出</div>
<div class="a" style="left:647px;top:714.5px;font-size:11px;color:#a0a0a0;line-height:15px">调试控制台</div>
<div class="a" style="left:724px;top:714.5px;font-size:11px;color:#e7e7e7;line-height:15px">终端</div>
<div class="a" style="left:722px;top:733px;width:26px;height:1px;background:#e7e7e7"></div>
<svg style="left:0;top:0" width="1920" height="1018"><g stroke="#c5c5c5" stroke-width="1.2" fill="none"><path d="M1830.8,715.5 v13 M1824.3,722 h13"/><path d="M1842.5,721 l4.3,4 4.3,-4"/><path d="M1864.2,724.5 l5.3,-5.3 5.3,5.3"/><path d="M1886.8,717.8 l8.8,8.5 M1895.6,717.8 l-8.8,8.5"/></g><g stroke="#c5c5c5" stroke-width="1.1" fill="none"><rect x="1722.3" y="744.2" width="13" height="13" rx="1"/><path d="M1726.8,747.3 l3.2,3.2 -3.2,3.2"/></g></svg>
<div class="a" style="left:1710px;top:737px;width:1px;height:249px;background:#3c3c3c"></div>
<div class="a" style="left:1711px;top:761px;width:199px;height:22px;background:#37373d"></div>
<div class="a" style="left:1740px;top:742px;font-size:13px;color:#cccccc;line-height:17px">bash</div>
<div class="a" style="left:1740px;top:764px;font-size:12px;color:#cccccc;line-height:17px">Run RISCV-QEMU</div>
<div class="a" style="left:1849px;top:764px;font-size:11.5px;color:#9d9d9d;line-height:17px">Task</div>
<svg style="left:0;top:0" width="1920" height="1018"><path d="M1886.5,772.5 l3.8,4.2 8,-9.5" stroke="#9d9d9d" stroke-width="1.3" fill="none"/><g stroke="#c8c8c8" fill="none" stroke-linecap="round"><path d="M1724,767.5 l3,3" stroke-width="2.6"/><path d="M1727,770.5 l7,7.5" stroke-width="2.8"/><path d="M1723.5,779 l8,-8" stroke-width="2.4"/><path d="M1731.5,771 a2.8,2.8 0 1 1 3.5,-3.5" stroke-width="2"/></g></svg>
<div class="a m" style="left:555px;top:748.20px;font-size:14px;letter-spacing:-0.45px;font-weight:normal;color:#cccccc;line-height:15.8px">CC -[M] <span class="cj">正</span><span class="cj">在</span><span class="cj">构</span><span class="cj">建</span>... jal.S</div>
<div class="a m" style="left:555px;top:764.00px;font-size:14px;letter-spacing:-0.45px;font-weight:normal;color:#cccccc;line-height:15.8px">CC -[M] <span class="cj">正</span><span class="cj">在</span><span class="cj">构</span><span class="cj">建</span>... main.c</div>
<div class="a m" style="left:555px;top:779.80px;font-size:14px;letter-spacing:-0.45px;font-weight:normal;color:#cccccc;line-height:15.8px">CC -[M] <span class="cj">正</span><span class="cj">在</span><span class="cj">构</span><span class="cj">建</span>... main.elf</div>
<div class="a m" style="left:555px;top:795.60px;font-size:14px;letter-spacing:-0.45px;font-weight:normal;color:#cccccc;line-height:15.8px">CC -[M] <span class="cj">正</span><span class="cj">在</span><span class="cj">构</span><span class="cj">建</span>... beq.o</div>
<div class="a m" style="left:555px;top:811.40px;font-size:14px;letter-spacing:-0.45px;font-weight:normal;color:#cccccc;line-height:15.8px">CC -[M] <span class="cj">正</span><span class="cj">在</span><span class="cj">构</span><span class="cj">建</span>... jal.o</div>
<div class="a m" style="left:555px;top:827.20px;font-size:14px;letter-spacing:-0.45px;font-weight:normal;color:#cccccc;line-height:15.8px">CC -[M] <span class="cj">正</span><span class="cj">在</span><span class="cj">构</span><span class="cj">建</span>... main.o</div>
<div class="a m" style="left:555px;top:858.80px;font-size:14px;letter-spacing:-0.45px;font-weight:bold;color:#cccccc;line-height:15.8px"><span class="cj">终</span><span class="cj">端</span><span class="cj">将</span><span class="cj">被</span><span class="cj">任</span><span class="cj">务</span><span class="cj">重</span><span class="cj">用</span><span class="cj">，</span><span class="cj">按</span><span class="cj">任</span><span class="cj">意</span><span class="cj">键</span><span class="cj">关</span><span class="cj">闭</span><span class="cj">。</span></div>
<div class="a m" style="left:555px;top:890.40px;font-size:14px;letter-spacing:-0.45px;font-weight:bold;color:#cccccc;line-height:15.8px">&gt; Executing task: echo Starting RISCV-QEMU&amp;qemu-riscv32 -g 1234 ./*.elf &lt;</div>
<div class="a m" style="left:555px;top:922.00px;font-size:14px;letter-spacing:-0.45px;font-weight:normal;color:#cccccc;line-height:15.8px">Starting RISCV-QEMU</div>
<div class="a m" style="left:555px;top:937.80px;font-size:14px;letter-spacing:-0.45px;font-weight:normal;color:#cccccc;line-height:15.8px">This a &gt;= b:1</div>
<div class="a m" style="left:555px;top:953.60px;font-size:14px;letter-spacing:-0.45px;font-weight:normal;color:#cccccc;line-height:15.8px">This a &gt;= b:1</div>
<div class="a" style="left:555.5px;top:968.90px;width:8px;height:15px;border:1px solid #cccccc"></div>
<div class="a" style="left:10px;top:986px;width:1900px;height:22px;background:#cc6633"></div>
<div class="a" style="left:10px;top:986px;width:33.5px;height:22px;background:#16825d"></div>
<svg style="left:0;top:0" width="1920" height="1018"><g stroke="#fff" stroke-width="1.3" fill="none"><path d="M22.5,993 l4,3.5 -4,3.5"/><path d="M32,991 l-4,3.5 4,3.5"/><circle cx="58" cy="997.3" r="6"/><path d="M55.5,994.8 l5,5 M60.5,994.8 l-5,5"/><path d="M84,991 l6.3,11 h-12.6 z"/><path d="M84,994.5 v4 M84,1000 v0.8"/></g><g stroke="#fff" fill="none" stroke-linecap="round"><path d="M118,992.5 l3,3" stroke-width="2.4"/><path d="M121,995.5 l6.5,7" stroke-width="2.5"/><path d="M117.5,1003 l7.5,-7.5" stroke-width="2.2"/><path d="M125,995.5 a2.6,2.6 0 1 1 3.3,-3.3" stroke-width="1.8"/></g><g stroke="#fff" stroke-width="1.3" fill="none"><path d="M159.5,992.5 l7.5,5 -6.5,4"/><path d="M155.5,998.5 h5.5 v4.5 h-5.5 z M158.2,996 v2.5"/></g></svg>
<div class="a" style="left:68px;top:989.8px;font-size:12px;color:#ffffff;line-height:16px">0</div>
<div class="a" style="left:93.5px;top:989.8px;font-size:12px;color:#ffffff;line-height:16px">0</div>
<div class="a" style="left:133px;top:989.8px;font-size:12px;color:#ffffff;line-height:16px">1</div>
<div class="a" style="left:171.5px;top:989.8px;font-size:12px;color:#ffffff;line-height:16px">(gdb) 启动 (17)</div>
<div class="a" style="left:1537px;top:989.8px;font-size:12px;color:#ffffff;line-height:16px">行 50，列 1</div>
<div class="a" style="left:1614px;top:989.8px;font-size:12px;color:#ffffff;line-height:16px">空格: 4</div>
<div class="a" style="left:1666px;top:989.8px;font-size:12px;color:#ffffff;line-height:16px">UTF-8</div>
<div class="a" style="left:1715px;top:989.8px;font-size:12px;color:#ffffff;line-height:16px">LF</div>
<div class="a" style="left:1744.5px;top:989.8px;font-size:11.5px;color:#ffffff;line-height:16px">RISC-V Assembly</div>
<svg style="left:0;top:0" width="1920" height="1018"><g stroke="#fff" stroke-width="1.2" fill="none"><circle cx="1857.5" cy="994.5" r="2.6"/><path d="M1853,1003 c0,-4 2,-5.5 4.5,-5.5 M1861,998 l3,-3 h-2 M1864,995 v2"/><path d="M1884,1001 h11 M1886,1001 v-5 c0,-4 7,-4 7,0 v5 M1888.5,1003 h2"/></g><circle cx="1894" cy="992.5" r="2.3" fill="#fff"/></svg>
</body></html>
